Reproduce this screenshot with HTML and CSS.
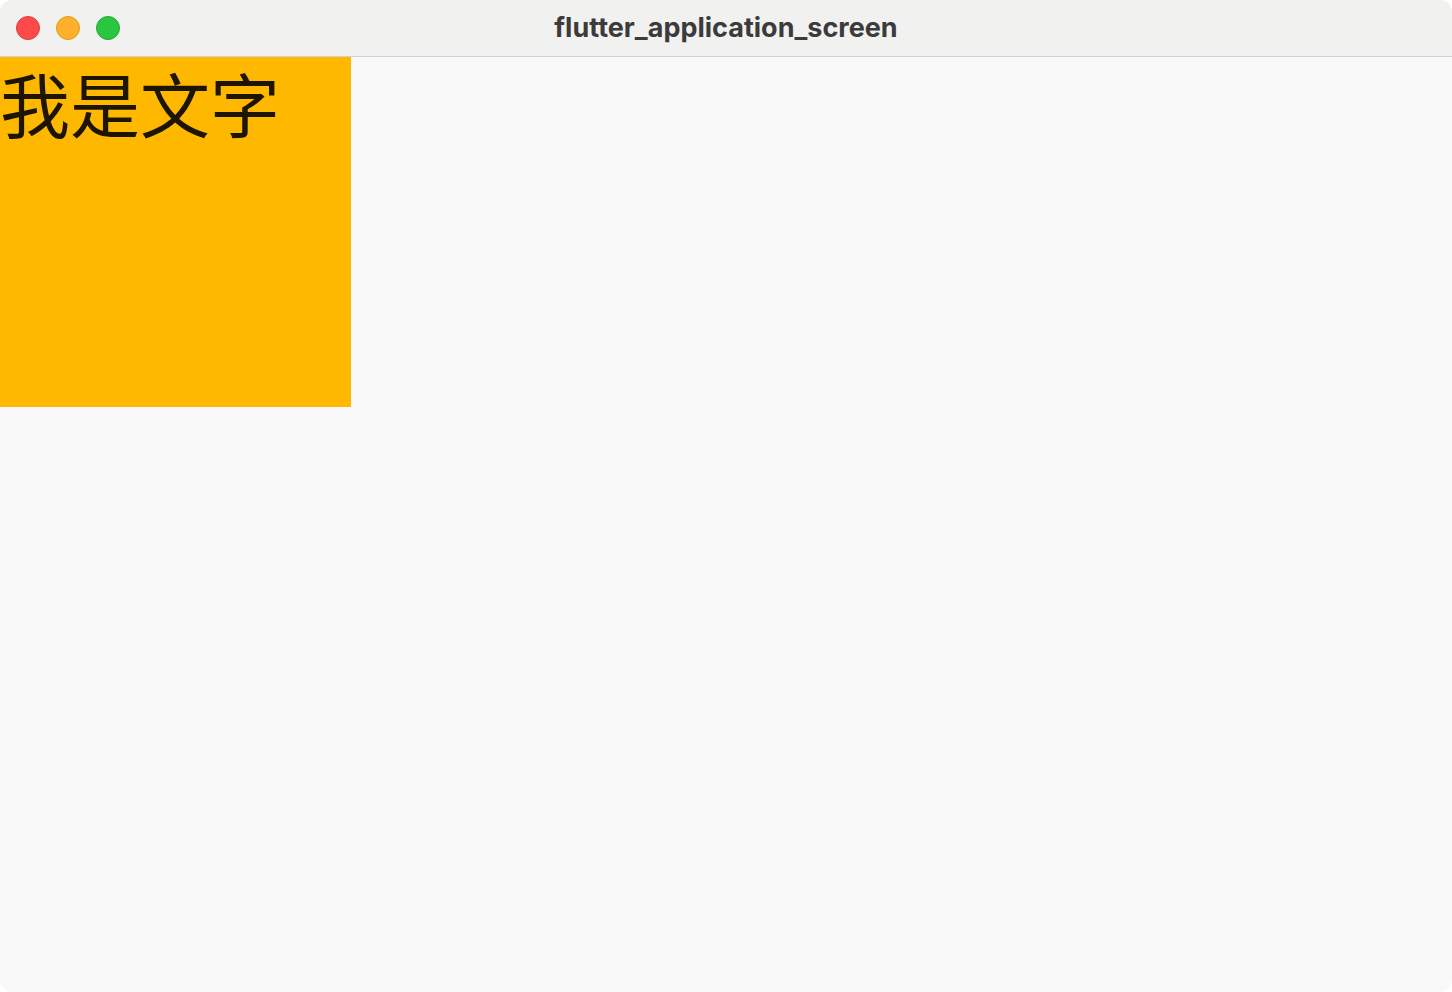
FILE: index.html
```html
<!DOCTYPE html>
<html lang="zh">
<head>
<meta charset="utf-8">
<link rel="stylesheet" href="styles.css">
<title>flutter_application_screen</title>
</head>
<body>
<div class="window">
  <div class="titlebar">
    <div class="lights">
      <span class="light red"></span>
      <span class="light yellow"></span>
      <span class="light green"></span>
    </div>
    <div class="title">flutter_application_screen</div>
  </div>
  <div class="content">
    <div class="box"><span class="text">我是文字</span></div>
  </div>
</div>
</body>
</html>
```

FILE: styles.css
```css
html, body {
  margin: 0;
  padding: 0;
  width: 1452px;
  height: 992px;
  background: #ffffff;
  overflow: hidden;
}
.window {
  width: 1452px;
  height: 992px;
  border-radius: 12px;
  overflow: hidden;
  background: #f9f9f9;
  display: flex;
  flex-direction: column;
}
.titlebar {
  height: 56px;
  flex: 0 0 56px;
  background: #f1f1f0;
  border-bottom: 1px solid #d2d2d2;
  position: relative;
  display: flex;
  align-items: center;
  justify-content: center;
}
.lights {
  position: absolute;
  left: 16px;
  top: 16px;
  display: flex;
  gap: 16px;
}
.light {
  width: 24px;
  height: 24px;
  border-radius: 50%;
  box-sizing: border-box;
}
.red { background: #fe4a4b; border: 1px solid #e0393a; }
.yellow { background: #feb02a; border: 1px solid #e09a1e; }
.green { background: #28c73f; border: 1px solid #1ea932; }
.title {
  font-family: Inter, "Noto Sans", sans-serif;
  font-weight: 700;
  font-size: 27px;
  color: #3b3b3b;
  margin-top: -2px;
}
.content {
  flex: 1;
}
.box {
  display: flow-root;
  box-sizing: border-box;
  width: 351px;
  height: 350px;
  padding-top: 5px;
  background: #ffb800;
}
.text {
  display: block;
  font-family: "Noto Sans CJK SC", sans-serif;
  font-size: 70px;
  line-height: 82px;
  color: #1e1500;
}
```
